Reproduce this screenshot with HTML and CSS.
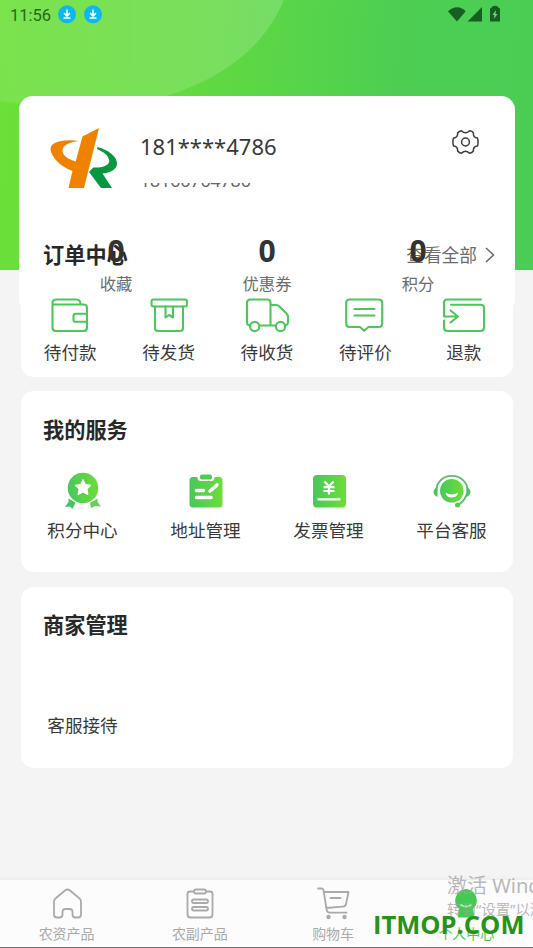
FILE: index.html
```html
<!DOCTYPE html>
<html lang="zh-CN">
<head>
<meta charset="utf-8">
<title>个人中心</title>
<link rel="stylesheet" href="styles.css">
</head>
<body>
<div class="app">
  <svg class="curve" width="290" height="110" viewBox="0 0 290 110"><defs><linearGradient id="cv" x1="0" x2="1"><stop offset="0" stop-color="#fff" stop-opacity=".1"/><stop offset="1" stop-color="#fff" stop-opacity=".17"/></linearGradient></defs><path fill="url(#cv)" d="M0 0H284C263 49 222 78 167 96C118 111 45 107 0 101Z"/></svg>
  <header class="status">
    <span class="time">11:56</span>
    <svg width="45" height="20" viewBox="57 4 45 20"><g fill="#10b7ec"><circle cx="67" cy="14.3" r="9"/><circle cx="93" cy="14.3" r="9"/></g><g fill="none" stroke="#fff" stroke-width="1.6"><path d="M67 9.5v6.3M64 13l3 3 3-3M63.500 18h7M93 9.500v6.300M90 13l3 3 3-3M89.500 18h7"/></g></svg>
    <svg class="signals" width="54" height="18" viewBox="447 5 54 18"><g fill="#175e22"><path d="M448 11.500Q449 9.800 452 8.500Q457 6 462 8.500Q464.500 9.700 465.500 11.500L457 21.500ZM467.500 21.500L482 7V21.500ZM490 9Q490 7.500 492 7.500V6.500Q495 5 498 6.500V7.500Q500 7.500 500 9V21.500H490Z"/></g><path d="M496 10l-3.500 5h2l-.7 4 3.700-5h-2Z" fill="#7bd183"/></svg>
  </header>

  <section class="profile">
    <div class="user">
      <svg class="logo" width="70" height="64" viewBox="49 126 70 64"><path fill="#f08200" d="M82.500 136.500L99 128L84 188H68.500L72.500 171C61 167 51 157 50.500 149C51 141.500 64 139 79 141C69 142.500 62.500 145 62.500 151C63 156 68 159 75.700 161.500Z"/><path fill="#08963f" d="M97.500 147C109 150 117 157 117 163.500C117 169.500 110 173 102.500 173.500L112 188H101L89 172L93.300 167.500C101 168 109 166 109.300 161C109 156 104 152 97 149Z"/></svg>
      <div class="ident"><div class="phone">181****4786</div><div class="account"><span>18166764786</span></div></div>
      <svg class="gear" width="28" height="28" viewBox="451 128 28 28" fill="none" stroke="#3c3c3c" stroke-width="1.500" stroke-linejoin="round"><path d="M461.500 130.700Q463.500 132.800 465.500 132.800T469.500 130.700Q472.500 131 473.400 133Q473 137.500 477.500 138Q478.700 142 477.500 146Q473 146.500 473.400 151Q472 153 469.500 153.300Q467.500 151.200 465.500 151.200T461.500 153.300Q459 153 457.600 151Q458 146.500 453.500 146Q452.300 142 453.500 138Q458 137.500 457.600 133Q459 131 461.500 130.700Z"/><circle cx="465.500" cy="142" r="3.900"/></svg>
    </div>
    <div class="stats">
      <div class="stat"><b>0</b><span>收藏</span></div>
      <div class="stat"><b>0</b><span>优惠券</span></div>
      <div class="stat"><b>0</b><span>积分</span></div>
    </div>
  </section>

  <section class="card orders">
    <div class="head"><h2>订单中心</h2><div class="all">查看全部<svg width="10" height="16" viewBox="0 0 10 16" fill="none" stroke="#666" stroke-width="1.500"><path d="M1 1l7.500 7L1 15"/></svg></div></div>
    <div class="grid five">
      <div class="item"><svg width="46" height="38" viewBox="47.500 296 46 38"><path d="M53 302V327.500Q53 331 56.500 331H84Q87.500 331 87.500 327.500V308Q87.500 304.500 84 304.500H53V303Q53 299.500 57 299.500H77Q81 299.500 81 304.500M87.500 313.700H76Q74 313.700 74 316V319.500Q74 321.800 76 321.800H87.500"/></svg><span>待付款</span></div>
      <div class="item"><svg width="46" height="38" viewBox="146 296 46 38"><rect x="151.500" y="299.500" width="35.500" height="7" rx="2"/><path d="M155 306.500V328Q155 331 158 331H180Q183 331 183 328V306.500M165.500 306.500V317.500L169.200 315L173 317.500V306.500"/></svg><span>待发货</span></div>
      <div class="item"><svg width="46" height="38" viewBox="244 296 46 38"><path d="M249.500 325.500Q247 325 247 322.500V303Q247 299.500 250.500 299.500H267Q270.500 299.500 270.500 303V325.500H259M270.500 305H276Q278 305 279.500 306.500L286 313Q288 315 288 317V322Q288 325 285 325.500M270.500 325.500H275"/><circle cx="254.700" cy="326.500" r="4.600"/><circle cx="280.500" cy="326.500" r="4.600"/></svg><span>待收货</span></div>
      <div class="item"><svg width="46" height="38" viewBox="342.500 296 46 38"><path d="M350 299.500H379Q382.700 299.500 382.700 303V323.500Q382.700 327 379 327H369L364.700 330.800L360.500 327H350Q346.700 327 346.700 323.500V303Q346.700 299.500 350 299.500M355 309H375M355 315.500H375"/></svg><span>待评价</span></div>
      <div class="item"><svg width="46" height="38" viewBox="441 296 46 38"><path d="M481 299.500H447Q444 299.500 444 303V316.500H457M450.500 310.500L458 316.500L450.500 322.500M451 304.700H480.500Q484 304.700 484 308V327.500Q484 331 480.500 331H447.500Q444 331 444 327.500V320.500"/></svg><span>退款</span></div>
    </div>
  </section>

  <section class="card services">
    <h2>我的服务</h2>
    <div class="grid four">
      <div class="item"><svg width="42" height="40" viewBox="62 471 42 40"><defs><linearGradient id="g"><stop offset="0" stop-color="#48c75d"/><stop offset="1" stop-color="#6cde38"/></linearGradient></defs><circle cx="83" cy="488" r="15.300" fill="url(#g)"/><path fill="#fff" stroke="#fff" stroke-width="1" stroke-linejoin="round" d="M83 479.500L85.500 484.500L91 485.300L87 489.200L88 494.700L83 492L78 494.700L79 489.200L75 485.300L80.500 484.500Z"/><path fill="#48c463" d="M68.500 498.500L75.500 502.500L72.500 509L69.800 506.500L65 507L68.500 502Z"/><path fill="#68ce59" d="M97.500 498.500L90 503L91 508L95.500 506L101 506.500L97.500 502Z"/></svg><span>积分中心</span></div>
      <div class="item"><svg width="42" height="40" viewBox="184.500 471 42 40"><rect x="189" y="477" width="33" height="30.500" rx="3.500" fill="url(#g)"/><rect x="197" y="472" width="17" height="9" rx="3.500" fill="#fff"/><rect x="199.500" y="474.500" width="12" height="5" rx="2" fill="#4ece50"/><g fill="none" stroke="#fff" stroke-width="3.600" stroke-linecap="round"><path d="M196 490.500H203M196 497.500H210.500M209.500 491L216.500 485"/></g></svg><span>地址管理</span></div>
      <div class="item"><svg width="42" height="40" viewBox="307.500 471 42 40"><rect x="312.500" y="475" width="33" height="32.500" rx="4" fill="url(#g)"/><path fill="none" stroke="#fff" stroke-width="2.200" d="M324 481.500L328.500 486.500L333 481.500M328.500 486.500V494.500M323 487.200H334M323 491H334M317 499.300H340"/></svg><span>发票管理</span></div>
      <div class="item"><svg width="42" height="40" viewBox="430.500 471 42 40"><path fill="none" stroke="#58bd6b" stroke-width="1.800" d="M436 492C435 483 442 475.800 451.300 475.800S468 483 467 492Q465 500 458.500 504.500"/><circle cx="451.300" cy="490.800" r="11.800" fill="url(#g)"/><path fill="#fff" d="M445 492.500Q451 496.500 457.500 492.500Q457 497.500 451.300 497.500T445 492.500"/><path fill="#4fbf62" d="M437 487Q433 489 433 492T437 497ZM466 487Q470 489 470 492T466 497Z"/><circle cx="457" cy="505" r="2.500" fill="#53c853"/></svg><span>平台客服</span></div>
    </div>
  </section>

  <section class="card merchant">
    <h2>商家管理</h2>
    <div class="grid four"><div class="item"><span>客服接待</span></div></div>
  </section>

  <nav class="tabs">
    <div class="tab"><svg width="36" height="34" viewBox="49 886 36 34"><path d="M54 901.500Q54 899.500 56 898L65 890.500Q67.500 888.500 70 890.500L79 898Q81 899.500 81 901.500V914.500Q81 917.500 78 917.500H75.500Q72.500 917.500 72.500 914.500V912Q72.500 909 69.500 909H65.500Q62.500 909 62.500 912V914.500Q62.500 917.500 59.500 917.500H57Q54 917.500 54 914.500Z"/></svg><span>农资产品</span></div>
    <div class="tab"><svg width="36" height="34" viewBox="182 886 36 34"><path d="M194 891.500H190Q187.500 891.500 187.500 894V914.500Q187.500 917.500 190.500 917.500H209.500Q212.500 917.500 212.500 914.500V894Q212.500 891.500 210 891.500H206"/><rect x="194" y="889.500" width="12" height="4" rx="2"/><rect x="192" y="899.500" width="16" height="3.500" rx="1.700"/><rect x="192" y="907" width="16" height="3.500" rx="1.700"/></svg><span>农副产品</span></div>
    <div class="tab"><svg width="36" height="34" viewBox="315.500 886 36 34"><path d="M318.500 888.500H322Q323.500 888.500 324 890L327 909Q327.500 912.700 330 912.700H347M324.500 892H349L346.500 904Q346 906.500 343 906.700L326.500 908M331 898H341"/><g fill="#aaa" stroke="none"><circle cx="329" cy="917" r="2.200"/><circle cx="345" cy="917" r="2.200"/></g></svg><span>购物车</span></div>
    <div class="tab active"><svg width="36" height="34" viewBox="449 886 36 34"><path fill="#43ca50" stroke="none" d="M467 889A11.500 11.500 0 0 1 474 909Q475 913 475 917.500H459Q459 913 460 909A11.500 11.500 0 0 1 467 889Z"/><path stroke="#b9efb9" stroke-width="2" d="M462 905Q467 908 472 905"/></svg><span>个人中心</span></div>
  </nav>
  <div class="activate"><p>激活 Windows</p><small>转到“设置”以激活</small></div>
  <div class="mark">ITMOP.COM</div>
</div>
</body>
</html>
```
FILE: styles.css
```css
* { box-sizing: border-box; }
body, h2, p { margin: 0; }
body { font-family: "Noto Sans", "Noto Sans CJK SC", sans-serif; color: #3a3a3a; }
svg { display: block; flex: none; }
.app {
  position: relative;
  width: 533px;
  height: 948px;
  overflow: hidden;
  display: flex;
  flex-direction: column;
  background: linear-gradient(95deg, #6ce038 0%, #62db3f 35%, #4dce53 73%, #4bcd55 100%) 0 0 / 100% 270px no-repeat #f4f4f4;
}
.curve { position: absolute; left: 0; top: 0; }
.status { position: relative; display: flex; align-items: center; height: 30px; padding: 0 32px 2px 10px; }
.time { width: 47px; font: 400 16.500px/20px Roboto, sans-serif; color: #23691a; padding-top: 3px; }
.signals { margin-left: auto; }
.profile { flex: none; height: 217px; margin: 66px 18px 0 19px; border-radius: 14px; background: #fff; position: relative; }
.user { display: flex; align-items: flex-start; height: 138px; padding: 30px 36px 0 30px; }
.ident { margin: 5px 0 0 21px; }
.phone { font-size: 22px; line-height: 30px; color: #383838; }
.account { display: flex; align-items: flex-end; height: 4px; margin-top: 22px; overflow: hidden; font-size: 17.600px; line-height: 24px; color: #666; }
.account span { margin-bottom: -5px; }
.gear { margin: 2px 0 0 auto; }
.stats { position: relative; z-index: 2; display: grid; grid-template-columns: repeat(3, 151px); justify-content: center; }
.stat { display: flex; flex-direction: column; align-items: center; }
.stat b { font-size: 30px; line-height: 34px; height: 39px; color: #333; }
.stat span { font-size: 16.300px; line-height: 22px; color: #6c6c6c; }
.card { position: relative; flex: none; width: 492px; margin-left: 21px; border-radius: 13px; background: #fff; }
h2 { font-size: 21.200px; line-height: 30px; font-weight: 700; color: #282828; }
.orders { height: 145px; margin-top: -81px; padding-top: 8px; }
.head { display: flex; justify-content: space-between; padding: 0 18px 0 22px; }
.all { display: flex; align-items: center; gap: 8px; font-size: 17.700px; line-height: 28px; color: #6c6c6c; }
.grid { display: grid; }
.five { grid-template-columns: repeat(5, 1fr); margin-top: 26px; }
.four { grid-template-columns: repeat(4, 1fr); }
.item { display: flex; flex-direction: column; align-items: center; font-size: 17.600px; line-height: 26px; }
.five svg { fill: none; stroke: #4dc65a; stroke-width: 2.100; stroke-linecap: round; stroke-linejoin: round; }
.five span { margin-top: 5px; }
.services { height: 181px; margin-top: 14px; padding-top: 24px; }
.services h2, .merchant h2 { padding-left: 22px; }
.services .four { margin-top: 26px; }
.services span { margin-top: 6px; }
.merchant { height: 181px; margin-top: 15px; padding-top: 23px; }
.merchant .four { margin-top: 72px; }
.tabs { display: grid; grid-template-columns: repeat(4, 1fr); height: 68px; margin-top: auto; padding-top: 6px; background: #fcfcfc; border-bottom: 1px solid #777; box-shadow: 0 -1px 3px #e8e8e8; }
.tab { display: flex; flex-direction: column; align-items: center; font-size: 14px; line-height: 20px; color: #aaa; }
.tab svg { fill: none; stroke: #aaa; stroke-width: 1.800; stroke-linejoin: round; stroke-linecap: round; }
.tab span { margin-top: 4px; }
.tabs .active { color: #4bc955; }
.activate { position: absolute; left: 447px; top: 872px; white-space: nowrap; color: rgba(160,160,160,.75); }
.activate p { font-size: 20px; line-height: 27px; }
.activate small { display: block; font-size: 14.500px; line-height: 20px; }
.mark { position: absolute; left: 373px; top: 908px; font: 700 25.500px/32px "Open Sans", sans-serif; color: #279319; }
```
